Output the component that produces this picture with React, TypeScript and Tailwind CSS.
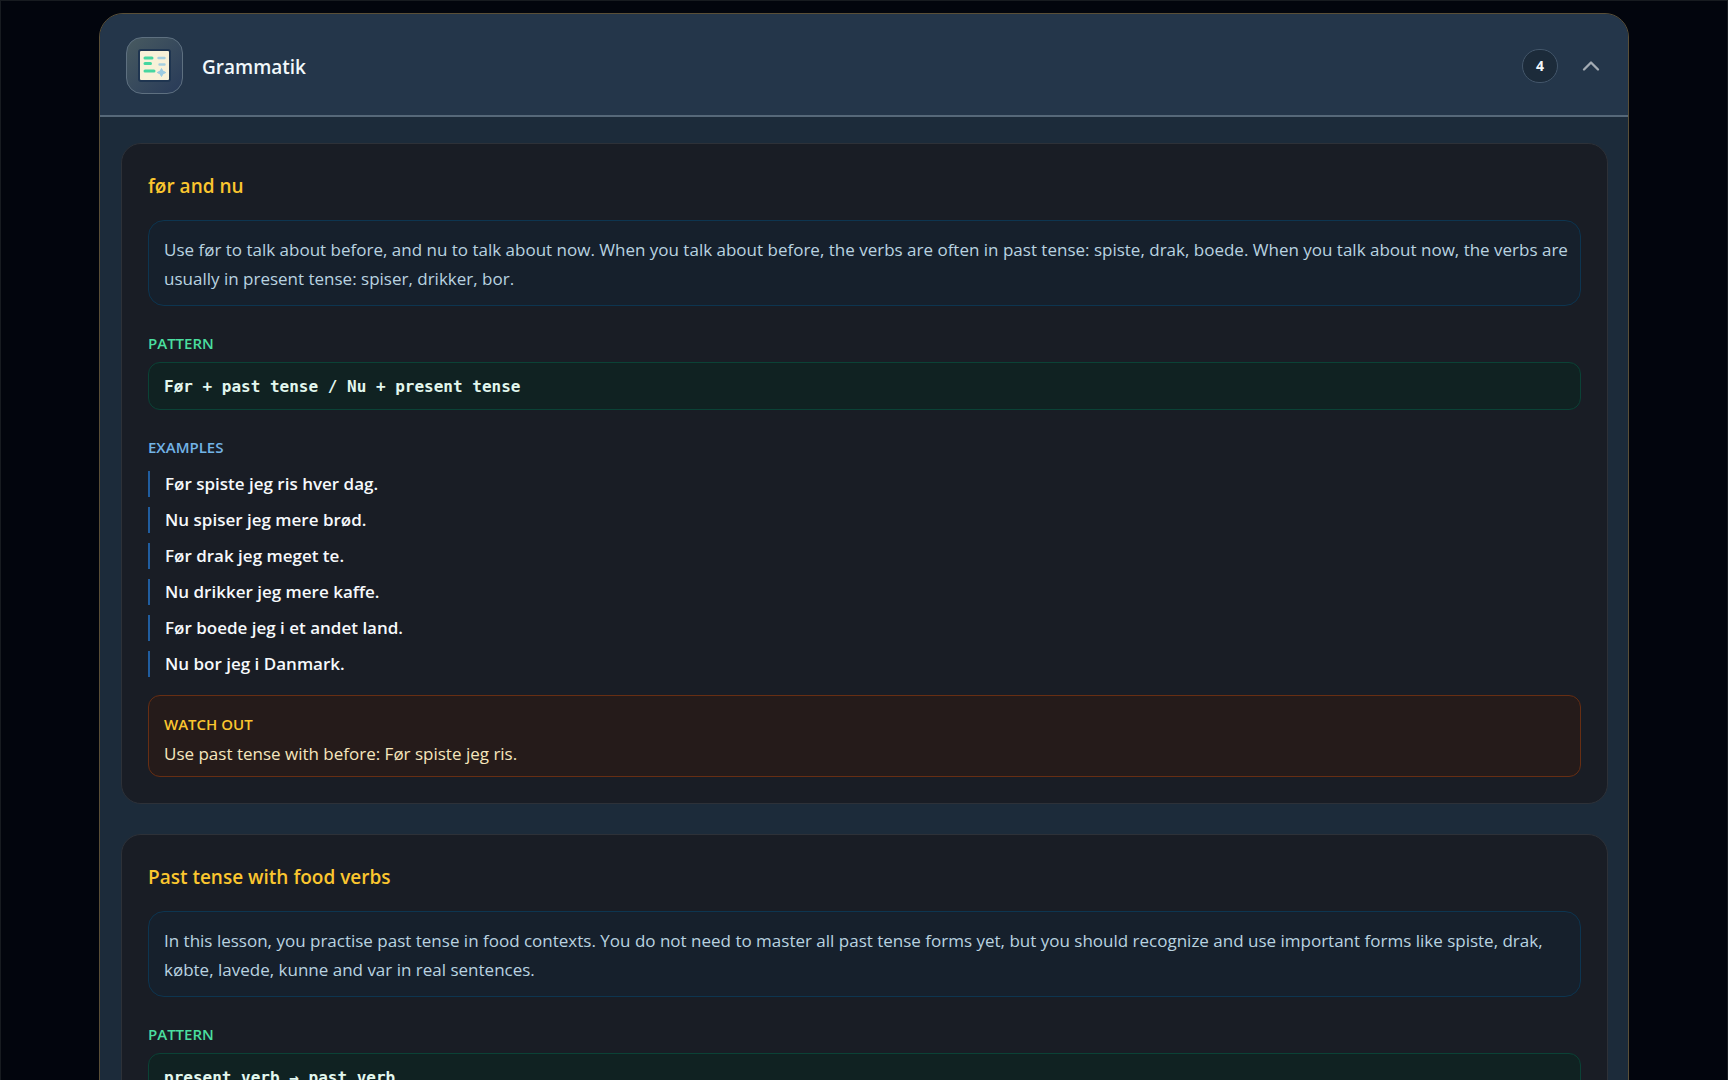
import React from "react";
import { ChevronUp, ChevronDown } from "lucide-react";

interface GrammarTopic {
  title: string;
  description: string;
  pattern: string;
  examples: string[];
  watchOut: string;
}

const topics: GrammarTopic[] = [
  {
    title: "før and nu",
    description:
      "Use før to talk about before, and nu to talk about now. When you talk about before, the verbs are often in past tense: spiste, drak, boede. When you talk about now, the verbs are usually in present tense: spiser, drikker, bor.",
    pattern: "Før + past tense / Nu + present tense",
    examples: [
      "Før spiste jeg ris hver dag.",
      "Nu spiser jeg mere brød.",
      "Før drak jeg meget te.",
      "Nu drikker jeg mere kaffe.",
      "Før boede jeg i et andet land.",
      "Nu bor jeg i Danmark.",
    ],
    watchOut: "Use past tense with before: Før spiste jeg ris.",
  },
  {
    title: "Past tense with food verbs",
    description:
      "In this lesson, you practise past tense in food contexts. You do not need to master all past tense forms yet, but you should recognize and use important forms like spiste, drak, købte, lavede, kunne and var in real sentences.",
    pattern: "present verb → past verb",
    examples: [],
    watchOut: "",
  },
];

const GrammarIcon = () => (
  <svg width="33" height="33" viewBox="0 0 33 33" aria-hidden="true">
    <rect x="0" y="0" width="33" height="33" rx="3" fill="#1f3550" />
    <rect x="2" y="2" width="29" height="29" rx="1" fill="#f8f1d8" />
    <g strokeLinecap="round" strokeWidth="3">
      <path d="M7 9h7M7 14.5h5.5M7 22h9" stroke="#45d6a0" />
      <path d="M20.5 9h6M21.5 15.5h5" stroke="#a5cfe0" strokeWidth="2.4" />
    </g>
    <path d="M23.5 19.5l1.4 2.6 2.9 1.4-2.9 1.4-1.4 2.6-1.4-2.6-2.9-1.4 2.9-1.4z" fill="#9ccbe2" stroke="#9ccbe2" strokeLinejoin="round" />
  </svg>
);

const TopicCard = ({ topic }: { topic: GrammarTopic }) => {
  return (
    <article className="rounded-[20px] border border-[#2d3138] bg-[#191d25] px-[26px] py-[26px]">
      <h3 className="text-[19px] leading-8 font-semibold text-[#fbc62f]">{topic.title}</h3>
      <p className="mt-[18px] rounded-2xl border border-[#0d3550] bg-[#16202c] pt-3.5 pr-2 pb-3 pl-[15px] text-[17px] leading-[29px] text-[#b9d3e0]">
        {topic.description}
      </p>
      <h4 className="mt-[25px] text-[15px] leading-6 font-semibold text-[#4ade9f]">PATTERN</h4>
      <p className="mt-[7px] rounded-xl border border-[#0b4236] bg-[#102222] px-[15px] pt-3 pb-2.5 font-['DejaVu_Sans_Mono',monospace] text-[16px] leading-6 font-bold text-[#e2f7ee]">
        {topic.pattern}
      </p>
      {topic.examples.length > 0 && (
        <>
          <h4 className="mt-[25px] text-[15px] leading-6 font-semibold text-[#72b3e6]">EXAMPLES</h4>
          <ul className="mt-3 flex flex-col gap-2.5">
            {topic.examples.map((example) => (
              <li key={example} className="border-l-2 border-[#205d9f] pl-[15px] text-[17px] leading-[26px] font-semibold text-[#f6f9fc]">
                {example}
              </li>
            ))}
          </ul>
        </>
      )}
      {topic.watchOut && (
        <div className="mt-[18px] rounded-xl border border-[#672e13] bg-[#251b1a] px-[15px] pt-4 pb-2">
          <h4 className="text-[15px] leading-6 font-semibold text-[#fbc62f]">WATCH OUT</h4>
          <p className="mt-1 text-[17px] leading-7 text-[#f6e6bd]">{topic.watchOut}</p>
        </div>
      )}
    </article>
  );
};

const App = () => {
  const [open, setOpen] = React.useState(true);

  return (
    <main className="h-screen overflow-hidden border-x border-t border-[#171b20] bg-[#02050d] px-[98px] pt-3 font-['Open_Sans','Noto_Sans',sans-serif]">
      <section className="overflow-hidden rounded-[24px] border border-[#5a4f37] bg-[#1c2b3a]">
        <h2>
          <button
            type="button"
            aria-expanded={open}
            onClick={() => setOpen(!open)}
            className="flex w-full cursor-pointer items-center border-b-2 border-[#566879] bg-[#24364a] pt-[23px] pr-[23px] pb-[21px] pl-[26px] text-left"
          >
            <span className="flex size-[57px] items-center justify-center rounded-2xl border border-[#5e7080] bg-linear-to-br from-[#485a60] to-[#283a58]">
              <GrammarIcon />
            </span>
            <span className="ml-[19px] pt-0.5 text-[19px] leading-[30px] font-semibold text-[#f1f8fb]">Grammatik</span>
            <span className="ml-auto flex h-[34px] w-9 items-center justify-center rounded-full border border-[#43566a] bg-[#1c2b3a] text-[14px] font-bold text-[#f1f8fb]">
              4
            </span>
            <span className="ml-[19px] text-[#a3abb3]">
              {open ? <ChevronUp size={28} strokeWidth={2} /> : <ChevronDown size={28} strokeWidth={2} />}
            </span>
          </button>
        </h2>
        {open && (
          <div className="flex flex-col gap-[30px] pt-[26px] pr-5 pb-5 pl-[21px]">
            {topics.map((topic) => (
              <TopicCard key={topic.title} topic={topic} />
            ))}
          </div>
        )}
      </section>
    </main>
  );
};

export default App;
